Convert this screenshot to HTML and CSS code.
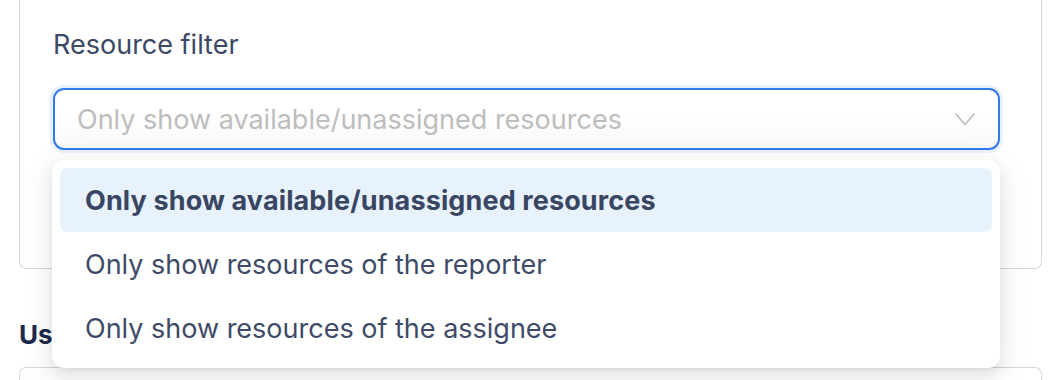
FILE: index.html
```html
<!DOCTYPE html>
<html>
<head>
<meta charset="utf-8">
<link rel="stylesheet" href="styles.css">
</head>
<body>
<div class="page">
  <section class="card">
    <div class="field">
      <label class="label">Resource filter</label>
      <div class="select">
        <span class="placeholder">Only show available/unassigned resources</span>
        <svg class="chevron" width="22" height="15" viewBox="0 0 22 15"><polyline points="1.5,1.5 11,12.5 20.5,1.5" fill="none" stroke="#bdbdbd" stroke-width="1.6"/></svg>
      </div>
    </div>
  </section>
  <h2 class="heading">Users</h2>
  <section class="card2"></section>

  <ul class="menu">
    <li class="item active">Only show available/unassigned resources</li>
    <li class="item">Only show resources of the reporter</li>
    <li class="item">Only show resources of the assignee</li>
  </ul>
</div>
</body>
</html>
```

FILE: styles.css
```css
* { box-sizing: border-box; }
html, body { margin: 0; padding: 0; background: #fff; }
body {
  font-family: Inter, "Noto Sans", sans-serif;
  color: #3d4a66;
  overflow: hidden;
  height: 380px;
}
.page {
  position: relative;
  padding-left: 19px;
  width: 1042px;
}
.card {
  border: 1px solid #d6d6d6;
  border-top: none;
  border-radius: 0 0 7px 7px;
  height: 269px;
  padding: 28px 41px 0 33px;
}
.label {
  display: block;
  font-size: 27px;
  line-height: 34px;
  color: #3b4966;
}
.select {
  margin-top: 26px;
  height: 62px;
  border: 2px solid #3478f0;
  border-radius: 11px;
  box-shadow: 0 0 0 3px #e7f0fd;
  background: linear-gradient(#ffffff 40%, #f8f8f8);
  display: flex;
  align-items: center;
  justify-content: space-between;
  padding: 0 22px 0 22px;
}
.placeholder {
  font-size: 27px;
  color: #bdbdbd;
}
.chevron { display: block; }
.heading {
  margin: 51px 0 0 0;
  font-size: 26px;
  line-height: 30px;
  font-weight: 700;
  color: #1b2a4c;
}
.card2 {
  margin-top: 17px;
  height: 13px;
  border: 1px solid #d6d6d6;
  border-bottom: none;
  border-radius: 7px 7px 0 0;
}
.menu {
  position: absolute;
  left: 52px;
  top: 160px;
  width: 948px;
  margin: 0;
  padding: 8px;
  list-style: none;
  background: #fff;
  border-radius: 12px;
  box-shadow: 0 6px 16px rgba(0,0,0,0.08), 0 3px 6px -4px rgba(0,0,0,0.12), 0 9px 28px 8px rgba(0,0,0,0.05);
}
.item {
  height: 64px;
  display: flex;
  align-items: center;
  padding-left: 25px;
  font-size: 27px;
  color: #3e4a68;
  border-radius: 7px;
}
.item.active {
  background: #e8f2fd;
  font-weight: 700;
  letter-spacing: 0.12px;
  color: #394662;
}
```
